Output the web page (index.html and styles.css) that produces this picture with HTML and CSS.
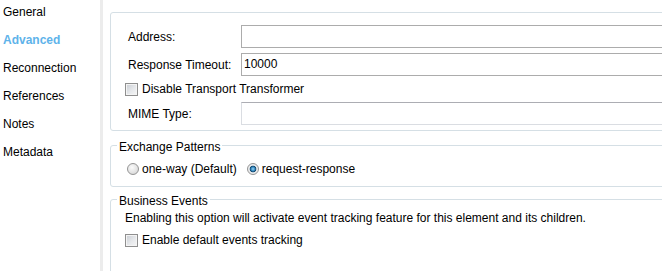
FILE: index.html
```html
<!DOCTYPE html>
<html>
<head>
<meta charset="utf-8">
<link rel="stylesheet" href="styles.css">
</head>
<body>
<div class="page">
  <nav class="nav">
    <div class="nav-item">General</div>
    <div class="nav-item active">Advanced</div>
    <div class="nav-item">Reconnection</div>
    <div class="nav-item">References</div>
    <div class="nav-item">Notes</div>
    <div class="nav-item">Metadata</div>
  </nav>
  <div class="divider"></div>
  <main class="content">
    <div class="group main-group">
      <div class="form-row"><span class="field-label">Address:</span><div class="input"></div></div>
      <div class="form-row second"><span class="field-label">Response Timeout:</span><div class="input">10000</div></div>
      <div class="check-row tall"><span class="checkbox"></span><span>Disable Transport Transformer</span></div>
      <div class="form-row"><span class="field-label">MIME Type:</span><div class="input soft"></div></div>
    </div>
    <fieldset class="fs exchange">
      <legend>Exchange Patterns</legend>
      <div class="radio-row">
        <span class="radio-opt"><span class="radio"></span>one-way (Default)</span>
        <span class="radio-opt"><span class="radio checked"></span>request-response</span>
      </div>
    </fieldset>
    <fieldset class="fs business">
      <legend>Business Events</legend>
      <p class="desc">Enabling this option will activate event tracking feature for this element and its children.</p>
      <div class="check-row events"><span class="checkbox"></span><span>Enable default events tracking</span></div>
    </fieldset>
  </main>
</div>
</body>
</html>
```
FILE: styles.css
```css
html, body {
  margin: 0;
  padding: 0;
  background: #fff;
}
body {
  font-family: "Liberation Sans", Arial, sans-serif;
  font-size: 12px;
  color: #000;
  overflow: hidden;
}
.page {
  display: flex;
  width: 662px;
  height: 271px;
  overflow: hidden;
}
.nav {
  flex: none;
  width: 100px;
  box-sizing: border-box;
  padding-left: 3px;
  margin-top: -2px;
}
.nav-item {
  height: 28px;
  line-height: 28px;
  white-space: nowrap;
}
.nav-item.active {
  color: #5eb3ea;
  font-weight: bold;
}
.divider {
  flex: none;
  width: 3px;
  background: #ececec;
}
.content {
  flex: 1;
  min-width: 0;
  overflow: hidden;
  padding: 12px 0 0 7px;
  display: flex;
  flex-direction: column;
}
.main-group {
  flex: none;
  margin-right: -10px;
  border: 1px solid #d5dfe5;
  border-radius: 3px;
  padding: 12px 0 5px 17px;
}
.form-row {
  display: grid;
  grid-template-columns: 113px 1fr;
  align-items: center;
  height: 23px;
}
.form-row.second {
  margin-top: 5px;
}
.input {
  height: 23px;
  box-sizing: border-box;
  border: 1px solid #acacac;
  padding: 0 2px;
  line-height: 21px;
}
.input.soft {
  border-color: #dadde2;
  border-top-color: #acadb3;
}
.check-row {
  display: flex;
  align-items: center;
}
.check-row.tall {
  height: 26px;
  margin-left: -3px;
}
.checkbox {
  flex: none;
  width: 13px;
  height: 13px;
  box-sizing: border-box;
  border: 1px solid #8f8f8f;
  background: linear-gradient(135deg, #c8ccd2 0%, #e6e8eb 55%, #f6f6f6 100%);
  box-shadow: inset 0 0 0 1px #f4f4f4;
  margin-right: 4px;
}
.fs {
  flex: none;
  margin: 6px -10px 0 0;
  min-inline-size: 0;
  border: 1px solid #d5dfe5;
  border-radius: 3px;
  padding: 0 0 9px 0;
}
.fs legend {
  margin-left: 6px;
  padding: 3px 2px 0;
  line-height: 14px;
}
.radio-row {
  display: flex;
  align-items: center;
  gap: 10px;
  height: 16px;
  padding: 7px 0 0 16px;
}
.radio-opt {
  display: inline-flex;
  align-items: center;
}
.radio {
  flex: none;
  width: 12px;
  height: 12px;
  box-sizing: border-box;
  border-radius: 50%;
  border: 1px solid #949494;
  background: radial-gradient(circle at 40% 35%, #fbfbfb 0%, #e4e4e4 55%, #cfcfcf 100%);
  margin-right: 3px;
}
.radio.checked {
  background: radial-gradient(circle at 50% 50%, #9fd6f5 0%, #2f86bf 28%, #14466a 42%, #e7e9eb 52%, #f5f5f5 100%);
}
.business {
  margin-top: 4px;
  min-height: 120px;
  padding: 0;
}
.desc {
  margin: 0;
  padding: 3px 0 0 14px;
  line-height: 14px;
  white-space: nowrap;
}
.check-row.events {
  height: 16px;
  margin: 7px 0 0 14px;
}
```
